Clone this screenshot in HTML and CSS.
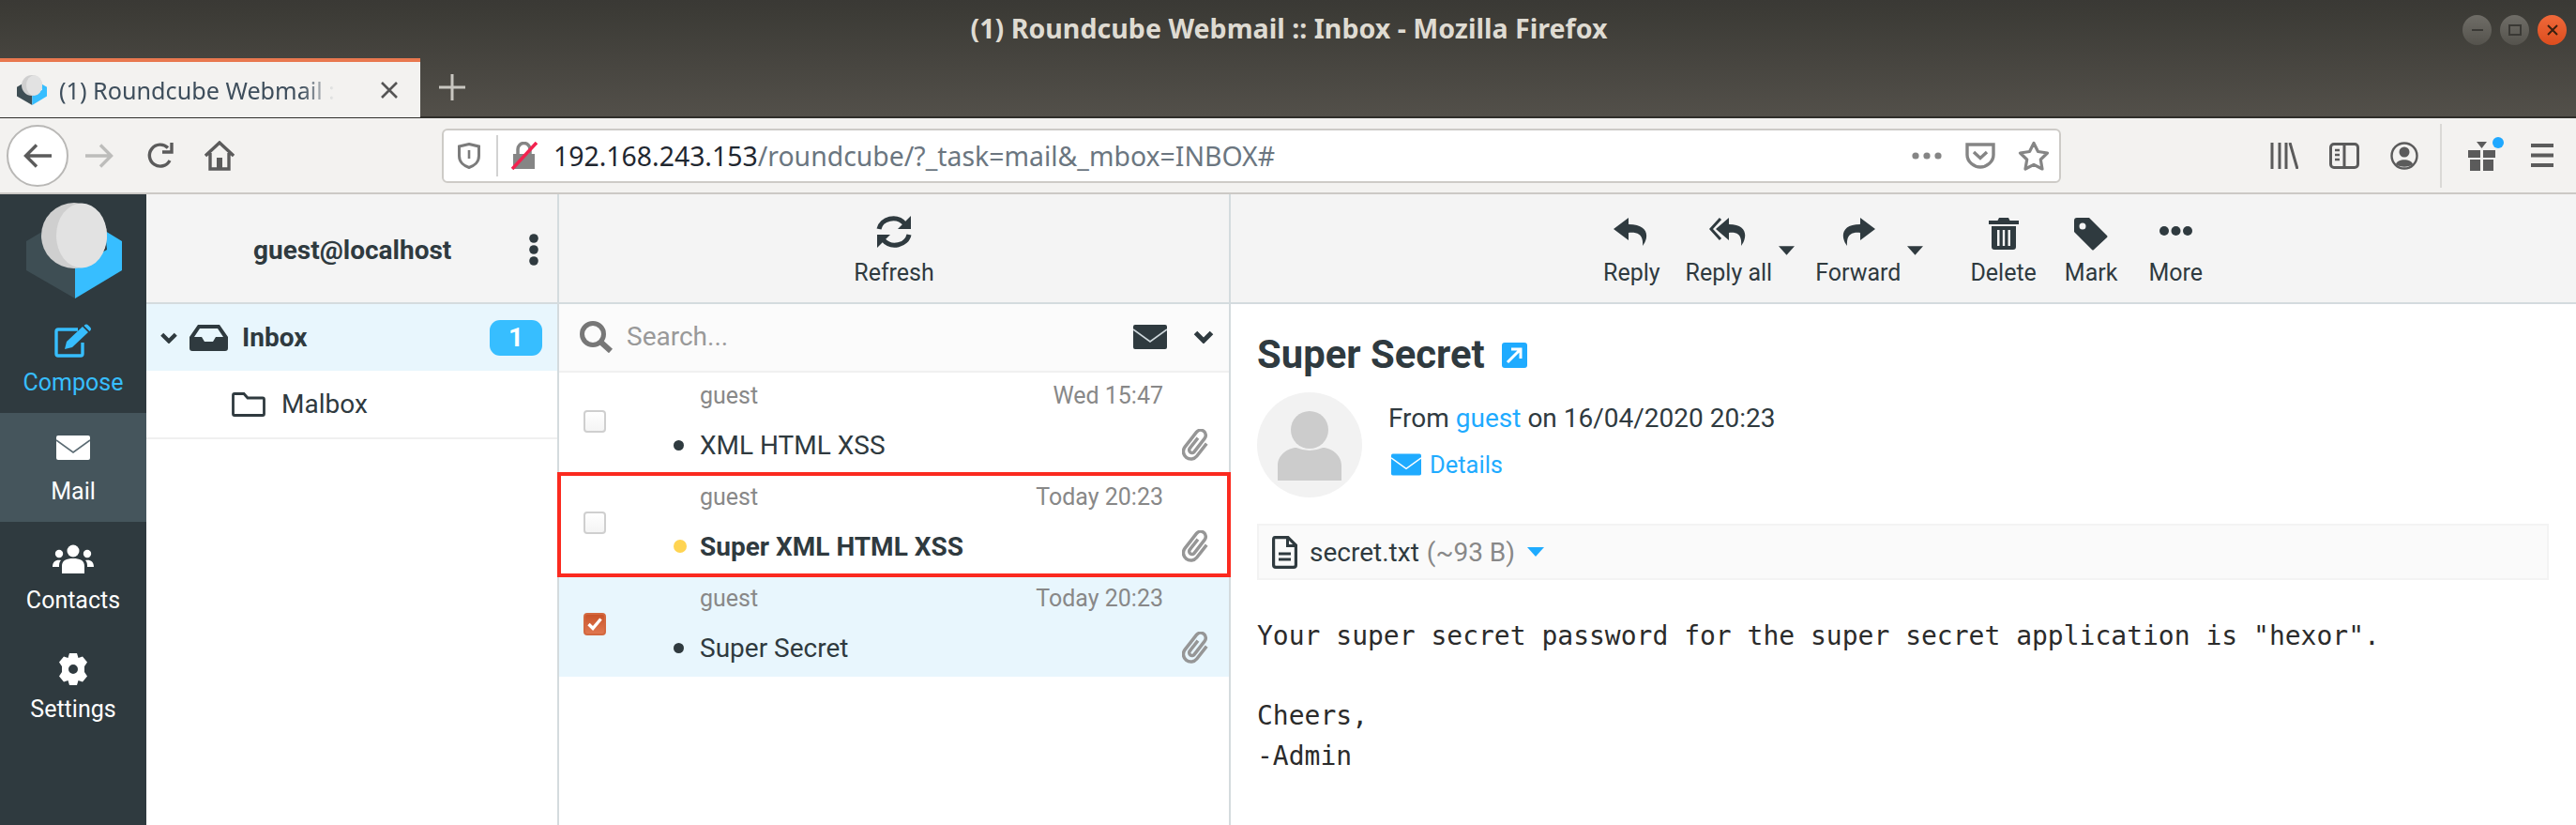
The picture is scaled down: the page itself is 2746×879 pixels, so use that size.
FILE: index.html
```html
<!DOCTYPE html>
<html lang="en">
<head>
    <meta charset="UTF-8">
    <title>(1) Roundcube Webmail :: Inbox - Mozilla Firefox</title>
    <link rel="stylesheet" href="styles.css">
</head>
<body>
    <svg class="defs" width="0" height="0">
        <symbol id="logo" viewBox="0 0 102 102">
            <path fill="#3e4e54" d="M0 41 L20 29 L52 69 V102 L0 72Z"/>
            <path fill="#37beff" d="M84 30 L102 41 V72 L52 102 V69 L86 50Z"/>
            <circle cx="51" cy="35" r="35" fill="#cfcfcf"/>
            <ellipse cx="59" cy="35" rx="27" ry="34.5" fill="#e2e2e2"/>
        </symbol>
        <symbol id="envelope" viewBox="0 0 36 26">
            <path fill="currentColor" d="M2 0H34Q36 0 36 2V24Q36 26 34 26H2Q0 26 0 24V2Q0 0 2 0Z"/>
            <path fill="none" stroke="var(--flap)" stroke-width="1.6" d="M0 5 L18 18 L36 5"/>
        </symbol>
        <symbol id="chevron" viewBox="0 0 22 14">
            <path fill="none" stroke="currentColor" stroke-width="5" d="M2.5 2.5 L11 11 L19.5 2.5"/>
        </symbol>
        <symbol id="clip" viewBox="0 0 30 34">
            <path fill="none" stroke="#969696" stroke-width="3.500" transform="rotate(38 15 17)" d="M12 10V24a3 3 0 0 0 6 0V6a5.500 5.500 0 0 0 -11 0V26a8 8 0 0 0 16 0V9"/>
        </symbol>
        <symbol id="caret" viewBox="0 0 18 10">
            <path fill="currentColor" d="M0 0H18L9 10Z"/>
        </symbol>
    </svg>

    <header class="chrome">
        <div class="titlebar">
            <span class="window-title">(1) Roundcube Webmail :: Inbox - Mozilla Firefox</span>
            <div class="window-buttons">
                <span class="wbtn"><svg width="14" height="14" viewBox="0 0 14 14"><path stroke="#3a3935" stroke-width="2" d="M1 7H13"/></svg></span>
                <span class="wbtn"><svg width="14" height="14" viewBox="0 0 14 14"><rect x="1" y="2" width="12" height="10" fill="none" stroke="#3a3935" stroke-width="2"/></svg></span>
                <span class="wbtn wbtn-close"><svg width="14" height="14" viewBox="0 0 14 14"><path stroke="#3a2010" stroke-width="2" d="M2 2L12 12M12 2L2 12"/></svg></span>
            </div>
        </div>
        <div class="tabbar">
            <div class="tab">
                <svg class="favicon" width="32" height="32"><use href="#logo"/></svg>
                <span class="tab-label">(1) Roundcube Webmail :</span>
                <svg class="tab-close" width="20" height="20" viewBox="0 0 20 20"><path stroke="#555" stroke-width="2.6" d="M2 2L18 18M18 2L2 18"/></svg>
            </div>
            <svg class="new-tab" width="28" height="28" viewBox="0 0 28 28"><path stroke="#c9c7c1" stroke-width="3" d="M14 0V28M0 14H28"/></svg>
        </div>
    </header>

    <nav class="navbar">
        <span class="back-btn">
            <svg width="32" height="28" viewBox="0 0 32 28"><path fill="none" stroke="#5b5b5b" stroke-width="3.4" d="M31 14H4M15 2.5L3.5 14L15 25.5"/></svg>
        </span>
        <svg class="nav-forward" width="32" height="28" viewBox="0 0 32 28"><path fill="none" stroke="#bdbdbb" stroke-width="3.4" d="M1 14H28M17 2.5L28.500 14L17 25.500"/></svg>
        <svg class="nav-reload" width="30" height="30" viewBox="0 0 30 30"><path fill="none" stroke="#5b5b5b" stroke-width="3.4" d="M25 20A11.500 11.500 0 1 1 23 6.500"/><path fill="none" stroke="#5b5b5b" stroke-width="3.4" d="M27 1V11H17"/></svg>
        <svg class="nav-home" width="32" height="32" viewBox="0 0 32 32"><path fill="none" stroke="#5b5b5b" stroke-width="3.4" d="M1 16L16 2L31 16M6 13V30H26V13"/><rect x="13" y="18" width="6" height="12" fill="#5b5b5b"/></svg>

        <div class="urlbar">
            <svg width="24" height="28" viewBox="0 0 24 28"><path fill="none" stroke="#7b7b7b" stroke-width="3" d="M12 1.500L22.500 4V14C22.500 21 17 25 12 26.500C7 25 1.500 21 1.500 14V4Z"/><path stroke="#7b7b7b" stroke-width="2.600" d="M12 8V17"/></svg>
            <span class="url-sep"></span>
            <svg class="url-lock" width="28" height="30" viewBox="0 0 28 30"><path fill="#858585" d="M2 13H25V29H2Z"/><path fill="none" stroke="#858585" stroke-width="3.500" d="M7 13V8A6.500 6.500 0 0 1 20 8V13"/><path stroke="#f3224f" stroke-width="3.600" d="M1 29L27 1"/></svg>
            <span class="url-text"><span class="url-host">192.168.243.153</span>/roundcube/?_task=mail&amp;_mbox=INBOX#</span>
            <svg class="url-dots" width="32" height="8" viewBox="0 0 32 8"><circle cx="4" cy="4" r="3.600" fill="#858585"/><circle cx="16" cy="4" r="3.600" fill="#858585"/><circle cx="28" cy="4" r="3.600" fill="#858585"/></svg>
            <svg class="url-pocket" width="32" height="28" viewBox="0 0 32 28"><path fill="none" stroke="#858585" stroke-width="3.400" d="M2 2H30V13C30 21 22 26 16 26C10 26 2 21 2 13Z"/><path fill="none" stroke="#858585" stroke-width="3.400" d="M9 10L16 16.500L23 10"/></svg>
            <svg class="url-star" width="34" height="32" viewBox="0 0 34 32"><path fill="none" stroke="#858585" stroke-width="3.200" stroke-linejoin="round" d="M17 2.500L21.500 11.500L31.500 13L24.300 20L26 30L17 25.300L8 30L9.700 20L2.500 13L12.500 11.500Z"/></svg>
        </div>

        <svg class="nav-library" width="30" height="28" viewBox="0 0 30 28"><path fill="none" stroke="#5b5b5b" stroke-width="3" d="M2 0V28M10 0V28M17 0V28M21 0L29 28"/></svg>
        <svg class="nav-sidebar" width="32" height="28" viewBox="0 0 32 28"><rect x="1.500" y="1.500" width="29" height="25" rx="3.500" fill="none" stroke="#5b5b5b" stroke-width="3"/><path stroke="#5b5b5b" stroke-width="3" d="M16 1V27"/><path stroke="#5b5b5b" stroke-width="2.400" d="M6 8H11M6 13H11M6 18H11"/></svg>
        <svg class="nav-account" width="30" height="30" viewBox="0 0 30 30"><circle cx="15" cy="15" r="13.500" fill="none" stroke="#5b5b5b" stroke-width="2.400"/><circle cx="15" cy="11" r="5.500" fill="#5b5b5b"/><path fill="#5b5b5b" d="M6 24C7 17.500 23 17.500 24 24C20 27.500 10 27.500 6 24Z"/></svg>
        <span class="nav-sep"></span>
        <span class="nav-gift">
            <svg width="30" height="32" viewBox="0 0 30 32"><path fill="#5b5b5b" d="M0 10H13V18H0ZM16 10H29V18H16ZM2 20H13V32H2ZM16 20H27V32H16Z"/><path fill="#5b5b5b" d="M9 1H20L14.500 8Z"/></svg>
            <span class="gift-dot"></span>
        </span>
        <svg class="nav-menu" width="24" height="25" viewBox="0 0 24 25"><path stroke="#5b5b5b" stroke-width="4" d="M0 2H24M0 12.500H24M0 23H24"/></svg>
    </nav>

    <main class="app">
        <aside class="taskmenu">
            <svg class="logo" width="102" height="102"><use href="#logo"/></svg>
            <a class="task task-compose">
                <svg width="40" height="36" viewBox="0 0 40 36"><path fill="none" stroke="#37beff" stroke-width="3.400" d="M25 6H4Q2 6 2 8V32Q2 34 4 34H28Q30 34 30 32V20"/><path fill="#37beff" d="M11 27L13 19L30 3L36 9L19 25ZM32 1.500Q34 -.500 36 1.500L38 3.500Q40 5.500 38 7.500L37.500 8L31.500 2Z"/></svg>
                <span>Compose</span>
            </a>
            <a class="task task-active">
                <svg class="mail-icon" width="36" height="26"><use href="#envelope"/></svg>
                <span>Mail</span>
            </a>
            <a class="task">
                <svg width="44" height="32" viewBox="0 0 44 32"><circle cx="22" cy="7" r="6.500" fill="#fff"/><circle cx="7" cy="10" r="4.200" fill="#fff"/><circle cx="37" cy="10" r="4.200" fill="#fff"/><path fill="#fff" d="M10 31V23C10 17 15 15 22 15C29 15 34 17 34 23V31ZM0 24C0 18 4 16 9 17C7 19 7 21 7 24ZM44 24C44 18 40 16 35 17C37 19 37 21 37 24Z"/></svg>
                <span>Contacts</span>
            </a>
            <a class="task">
                <svg width="34" height="34" viewBox="0 0 34 34"><path fill="#fff" fill-rule="evenodd" d="M13 0H21L22.500 5L27 3.500L32 9.500L29 14V20L32 24.500L27 30.500L22.500 29L21 34H13L11.500 29L7 30.500L2 24.500L5 20V14L2 9.500L7 3.500L11.500 5ZM17 12A5 5 0 1 0 17 22A5 5 0 1 0 17 12Z"/></svg>
                <span>Settings</span>
            </a>
        </aside>

        <section class="folders">
            <div class="pane-header folders-header">
                <span class="account-name">guest@localhost</span>
                <svg class="account-menu" width="10" height="34" viewBox="0 0 10 34"><circle cx="5" cy="5" r="4.800" fill="#2f3a3f"/><circle cx="5" cy="17" r="4.800" fill="#2f3a3f"/><circle cx="5" cy="29" r="4.800" fill="#2f3a3f"/></svg>
            </div>
            <div class="folder folder-selected">
                <svg class="folder-toggle" width="20" height="12"><use href="#chevron"/></svg>
                <svg class="folder-inbox" width="41" height="28" viewBox="0 0 41 28"><path fill="#2f3a3f" fill-rule="evenodd" d="M9 0H32L41 13V25Q41 28 38 28H3Q0 28 0 25V13ZM11 4L5 13H13L16 18H25L28 13H36L30 4Z"/></svg>
                <span class="folder-name">Inbox</span>
                <span class="badge">1</span>
            </div>
            <div class="folder folder-sub">
                <svg width="36" height="26" viewBox="0 0 36 26"><path fill="none" stroke="#2f3a3f" stroke-width="2.800" d="M1.500 3Q1.500 1.500 3 1.500H13L17 6H33Q34.500 6 34.500 7.500V23Q34.500 24.500 33 24.500H3Q1.500 24.500 1.500 23Z"/></svg>
                <span>Malbox</span>
            </div>
        </section>

        <section class="messages">
            <div class="pane-header messages-header">
                <a class="tool tool-refresh">
                    <svg width="38" height="36" viewBox="0 0 38 36"><path fill="none" stroke="#2f3a3f" stroke-width="5" d="M3 15C5 4 22 -1 31 10"/><path fill="#2f3a3f" d="M37 1V15H23Z"/><path fill="none" stroke="#2f3a3f" stroke-width="5" d="M35 21C33 32 16 37 7 26"/><path fill="#2f3a3f" d="M1 35V21H15Z"/></svg>
                    <span>Refresh</span>
                </a>
            </div>
            <div class="searchbar">
                <svg class="search-icon" width="36" height="34" viewBox="0 0 36 34"><circle cx="15" cy="14" r="11.500" fill="none" stroke="#777" stroke-width="5"/><path stroke="#777" stroke-width="6" d="M23 22L34 32"/></svg>
                <span class="search-text">Search...</span>
                <svg class="search-mail" width="36" height="26" style="--flap:#cfd8dc"><use href="#envelope"/></svg>
                <svg class="search-more" width="22" height="14"><use href="#chevron"/></svg>
            </div>
            <div class="msg">
                <span class="msg-check"></span>
                <span class="msg-dot"></span>
                <div class="msg-meta"><span>guest</span><span>Wed 15:47</span></div>
                <span class="msg-subject">XML HTML XSS</span>
                <svg class="msg-clip" width="30" height="34"><use href="#clip"/></svg>
            </div>
            <div class="msg msg-marked">
                <span class="msg-check"></span>
                <span class="msg-dot msg-dot-unread"></span>
                <div class="msg-meta"><span>guest</span><span>Today 20:23</span></div>
                <span class="msg-subject msg-subject-unread">Super XML HTML XSS</span>
                <svg class="msg-clip" width="30" height="34"><use href="#clip"/></svg>
            </div>
            <div class="msg msg-selected">
                <span class="msg-check msg-check-on">
                    <svg width="16" height="14" viewBox="0 0 16 14"><path fill="none" stroke="#fff" stroke-width="3.400" d="M1.500 7L6 11.500L14.500 1.500"/></svg>
                </span>
                <span class="msg-dot"></span>
                <div class="msg-meta"><span>guest</span><span>Today 20:23</span></div>
                <span class="msg-subject">Super Secret</span>
                <svg class="msg-clip" width="30" height="34"><use href="#clip"/></svg>
            </div>
        </section>

        <section class="content">
            <div class="pane-header content-header">
                <a class="tool tool-reply">
                    <svg width="40" height="30" viewBox="0 0 40 30"><path fill="#2f3a3f" d="M17 0L1 12L17 24V16C28 15 33 19 32 30C39 21 39 7 17 7Z"/></svg>
                    <span>Reply</span>
                </a>
                <a class="tool tool-replyall">
                    <svg width="41" height="30" viewBox="0 0 41 30"><path fill="#2f3a3f" d="M21 0L7 12L21 24V16C31 15 35 19 34 30C41 21 41 7 21 7Z"/><path fill="none" stroke="#2f3a3f" stroke-width="3" d="M12 1L2 12L12 23"/></svg>
                    <span>Reply all</span>
                </a>
                <svg class="tool-caret" width="17" height="10"><use href="#caret"/></svg>
                <a class="tool tool-forward">
                    <svg width="38" height="30" viewBox="0 0 38 30"><path fill="#2f3a3f" d="M21 0L37 12L21 24V16C11 15 6 19 7 30C0 21 0 7 21 7Z"/></svg>
                    <span>Forward</span>
                </a>
                <svg class="tool-caret" width="17" height="10"><use href="#caret"/></svg>
                <a class="tool tool-delete">
                    <svg width="32" height="34" viewBox="0 0 32 34"><path fill="#2f3a3f" fill-rule="evenodd" d="M11 0H21L22.500 3H32V7H0V3H9.500ZM3 9H29V31Q29 34 26 34H6Q3 34 3 31ZM9 13V30H11.500V13ZM14.800 13V30H17.200V13ZM20.500 13V30H23V13Z"/></svg>
                    <span>Delete</span>
                </a>
                <a class="tool tool-mark">
                    <svg width="36" height="35" viewBox="0 0 36 35"><path fill="#2f3a3f" fill-rule="evenodd" d="M3 0H16L35 19Q36 20 35 21L21 34Q20 35 19 34L0 15V3Q0 0 3 0ZM9 5.500A3.500 3.500 0 1 0 9 12.500A3.500 3.500 0 1 0 9 5.500Z"/></svg>
                    <span>Mark</span>
                </a>
                <a class="tool tool-more">
                    <svg class="more-icon" width="35" height="12" viewBox="0 0 35 12"><circle cx="5" cy="6" r="5" fill="#2f3a3f"/><circle cx="17.500" cy="6" r="5" fill="#2f3a3f"/><circle cx="30" cy="6" r="5" fill="#2f3a3f"/></svg>
                    <span>More</span>
                </a>
            </div>
            <div class="message">
                <h2 class="subject">Super Secret
                    <svg class="open-icon" width="27" height="27" viewBox="0 0 27 27"><rect width="27" height="27" rx="3" fill="#1fabff"/><path fill="none" stroke="#fff" stroke-width="3" d="M6 21L19 8M10 7H20V17"/></svg>
                </h2>
                <div class="sender">
                    <svg class="avatar" width="112" height="112" viewBox="0 0 112 112"><circle cx="56" cy="56" r="56" fill="#f2f2f2"/><ellipse cx="56" cy="40" rx="20" ry="20" fill="#ccc"/><path fill="#ccc" d="M22 94V78C22 66 34 59 42 59Q56 65 70 59C78 59 90 66 90 78V94Z"/></svg>
                    <div class="sender-info">
                        <div class="sender-line">From <a class="link">guest</a> on 16/04/2020 20:23</div>
                        <a class="details"><svg width="32" height="24" style="--flap:#fff"><use href="#envelope"/></svg>Details</a>
                    </div>
                </div>
                <div class="attachments">
                    <svg width="27" height="35" viewBox="0 0 27 35"><path fill="none" stroke="#2f3a3f" stroke-width="3.200" d="M3 1.600H17L25.400 10V31Q25.400 33.400 23 33.400H4Q1.600 33.400 1.600 31V4Q1.600 1.600 3 1.600Z"/><path fill="#2f3a3f" d="M15 2H18V9H25V12H15Z"/><path stroke="#2f3a3f" stroke-width="3" d="M7 19H20M7 25H20"/></svg>
                    <span class="file-name">secret.txt</span>
                    <span class="file-size">(~93 B)</span>
                    <svg class="file-caret" width="18" height="10"><use href="#caret"/></svg>
                </div>
                <pre class="body-text">Your super secret password for the super secret application is "hexor".

Cheers,
-Admin</pre>
            </div>
        </section>
    </main>
</body>
</html>
```

FILE: styles.css
```css
* {
    box-sizing: border-box;
}

html, body {
    margin: 0;
    height: 879px;
    overflow: hidden;
}

body {
    font-family: Roboto, "Liberation Sans", sans-serif;
    font-size: 25px;
    color: #2f3a3f;
    background-color: #fff;
    display: flex;
    flex-direction: column;
}

.defs {
    position: absolute;
}

svg {
    display: block;
    flex: none;
    --flap: #5b6b73;
    color: inherit;
}

a {
    color: inherit;
    text-decoration: none;
}

/* window frame */
.chrome {
    height: 126px;
    flex: none;
    background: linear-gradient(#3a3935 0, #3c3b36 12px, #53504a 125px);
    border-bottom: 2px solid #2f2e2a;
}

.titlebar {
    height: 61px;
    display: flex;
    align-items: center;
    justify-content: center;
    padding: 0 0 3px 2px;
    position: relative;
}

.window-title {
    font-family: "Noto Sans", sans-serif;
    font-weight: 700;
    font-size: 28.6px;
    color: #dfdbd2;
}

.window-buttons {
    position: absolute;
    top: 16px;
    right: 10px;
    display: flex;
    gap: 9px;
}

.wbtn {
    width: 31px;
    height: 32px;
    border-radius: 50%;
    background: linear-gradient(#6f6d67, #55534d);
    display: flex;
    align-items: center;
    justify-content: center;
}

.wbtn-close {
    background: linear-gradient(#f0693a, #dc4d1e);
}

.tabbar {
    height: 63px;
    display: flex;
    align-items: flex-start;
    margin-top: 1px;
}

.tab {
    width: 448px;
    height: 63px;
    border-top: 4px solid #e9784f;
    background-color: #f3f2f0;
    display: flex;
    align-items: center;
    padding: 0 23px 0 18px;
    margin-bottom: 1px;
}

.tab-label {
    font-family: "Noto Sans", sans-serif;
    font-size: 25.2px;
    color: #3e4e5c;
    margin-left: 13px;
    white-space: nowrap;
    -webkit-mask-image: linear-gradient(to right, #000 88%, transparent 100%);
    mask-image: linear-gradient(to right, #000 88%, transparent 100%);
}

.tab-close {
    margin-left: auto;
}

.new-tab {
    margin: 17px 0 0 20px;
}

/* navigation toolbar */
.navbar {
    height: 81px;
    flex: none;
    display: flex;
    align-items: center;
    padding-left: 7px;
    background-color: #f3f2f0;
    border-bottom: 2px solid #ccc9c5;
}

.back-btn {
    width: 66px;
    height: 66px;
    border-radius: 50%;
    border: 2px solid #b9b8b6;
    background-color: #fff;
    display: flex;
    align-items: center;
    justify-content: center;
}

.nav-forward { margin-left: 17px; }
.nav-reload { margin-left: 34px; }
.nav-home { margin-left: 32px; }
.nav-library { margin-left: 223px; }
.nav-sidebar { margin-left: 33px; }
.nav-account { margin-left: 33px; }

.urlbar {
    margin-left: 221px;
    width: 1726px;
    height: 58px;
    background-color: #fff;
    border: 2px solid #cdcbc7;
    border-radius: 6px;
    display: flex;
    align-items: center;
    padding-left: 15px;
}

.url-sep {
    width: 2px;
    height: 44px;
    margin-left: 17px;
    background-color: #d2d2d2;
}

.url-lock { margin-left: 14px; }

.url-text {
    font-family: "Noto Sans", sans-serif;
    font-size: 28.4px;
    color: #6b7680;
    margin-left: 17px;
    white-space: nowrap;
}

.url-host {
    color: #1f2730;
}

.url-dots { margin-left: auto; }
.url-pocket { margin-left: 25px; }
.url-star { margin: 0 10px 0 24px; }

.nav-sep {
    width: 2px;
    height: 68px;
    margin-left: 23px;
    background-color: #dad9d6;
}

.nav-gift {
    margin-left: 28px;
    position: relative;
}

.gift-dot {
    position: absolute;
    top: -4px;
    right: -8px;
    width: 12px;
    height: 12px;
    border-radius: 50%;
    background-color: #1fa8ff;
}

.nav-menu { margin-left: 37px; }

/* app panes */
.app {
    flex: 1;
    display: flex;
    min-height: 0;
}

.taskmenu {
    width: 156px;
    flex: none;
    background-color: #2f3a3f;
    color: #fff;
    display: flex;
    flex-direction: column;
    align-items: center;
    padding-top: 9px;
}

.logo {
    margin: 0 0 6px 2px;
}

.task {
    width: 100%;
    height: 116px;
    display: flex;
    flex-direction: column;
    align-items: center;
    justify-content: flex-end;
    padding-bottom: 18px;
}

.task svg {
    margin-bottom: auto;
    margin-top: 24px;
}

.task-compose svg {
    margin-top: 21px;
}

.task-compose {
    color: #37beff;
}

.task-active {
    background-color: #45555c;
}

.mail-icon {
    color: #fff;
}

.folders {
    width: 440px;
    flex: none;
    border-right: 2px solid #d4dbde;
    font-size: 28px;
}

.pane-header {
    height: 117px;
    background-color: #f4f4f4;
    border-bottom: 2px solid #d4dbde;
    display: flex;
}

.folders-header {
    align-items: center;
    padding: 3px 0 0 114px;
}

.account-name {
    font-weight: 700;
    font-size: 28px;
}

.account-menu {
    margin-left: 83px;
}

.folder {
    height: 71px;
    display: flex;
    align-items: center;
}

.folder-selected {
    background-color: #e8f6fd;
    padding-left: 14px;
}

.folder-toggle {
    margin: 0 12px 0 0;
}

.folder-name {
    font-weight: 700;
    margin-left: 15px;
}

.badge {
    margin-left: auto;
    margin-right: 16px;
    width: 56px;
    height: 38px;
    border-radius: 11px;
    background-color: #37beff;
    color: #fff;
    font-weight: 700;
    text-align: center;
    line-height: 38px;
}

.folder-sub {
    padding-left: 91px;
    gap: 17px;
    height: 73px;
    border-bottom: 2px solid #f0f0f0;
}

.messages {
    width: 716px;
    flex: none;
    border-right: 2px solid #d4dbde;
}

.messages-header {
    justify-content: center;
}

.tool {
    display: flex;
    flex-direction: column;
    align-items: center;
    justify-content: flex-end;
    padding-bottom: 17px;
}

.tool svg {
    margin-bottom: auto;
    margin-top: 25px;
}

.tool-refresh svg {
    margin-top: 22px;
}

.searchbar {
    height: 73px;
    background-color: #fbfbfb;
    border-bottom: 2px solid #f0f0f0;
    display: flex;
    align-items: center;
    padding: 0 0 2px 21px;
}

.search-text {
    margin-left: 15px;
    color: #999;
    font-size: 28px;
}

.search-mail {
    margin-left: auto;
}

.search-more {
    margin: 0 16px 0 28px;
}

.msg {
    height: 108px;
    display: grid;
    grid-template-columns: 122px 28px 1fr 50px;
    grid-template-rows: 50px 54px;
    padding-right: 20px;
}

.msg-selected {
    background-color: #e8f6fd;
}

.msg-marked {
    outline: 4px solid #fb2a1f;
    outline-offset: -2px;
}

.msg-check {
    grid-row: 1 / 3;
    grid-column: 1;
    align-self: center;
    margin-left: 26px;
    width: 24px;
    height: 24px;
    border: 2px solid #cfcfcf;
    border-radius: 4px;
    background: linear-gradient(#fff, #f4f4f4);
    display: flex;
    align-items: center;
    justify-content: center;
}

.msg-check-on {
    background: linear-gradient(#c9542a, #e0774f);
    border-color: #d3683f;
}

.msg-dot {
    grid-row: 2;
    grid-column: 2;
    align-self: center;
    width: 11px;
    height: 11px;
    border-radius: 50%;
    background-color: #2f3a3f;
}

.msg-dot-unread {
    width: 14px;
    height: 14px;
    background-color: #ffd452;
}

.msg-meta {
    grid-row: 1;
    grid-column: 3;
    align-self: end;
    display: flex;
    justify-content: space-between;
    color: #888;
    font-size: 25px;
    line-height: 28px;
    margin-bottom: 11px;
}

.msg-subject {
    grid-row: 2;
    grid-column: 3;
    align-self: center;
    font-size: 28px;
}

.msg-subject-unread {
    font-weight: 700;
}

.msg-clip {
    grid-row: 2;
    grid-column: 4;
    align-self: center;
    justify-self: end;
}

.content {
    flex: 1;
    min-width: 0;
}

.content-header {
    padding-left: 397px;
}

.tool-caret {
    margin: 55px 0 0 7px;
}

.tool-replyall { margin-left: 27px; }
.tool-forward { margin-left: 22px; }
.tool-delete { margin-left: 50px; }
.tool-mark { margin-left: 30px; }
.tool-more { margin-left: 33px; }

.more-icon {
    margin-top: 33px !important;
}

.message {
    padding: 0 29px 0 28px;
}

.subject {
    margin: 33px 0 0;
    font-size: 41.8px;
    font-weight: 700;
    line-height: 42px;
    display: flex;
    align-items: center;
    gap: 18px;
}

.sender {
    margin-top: 19px;
    display: flex;
}

.sender-info {
    margin-left: 28px;
    font-size: 28px;
}

.sender-line {
    line-height: 32px;
    margin-top: 12px;
}

.link {
    color: #1fabff;
}

.details {
    display: flex;
    align-items: center;
    gap: 9px;
    margin: 19px 0 0 3px;
    color: #1fabff;
    font-size: 25.5px;
    line-height: 28px;
}

.attachments {
    margin-top: 28px;
    height: 60px;
    background-color: #fafafa;
    border: 2px solid #f3f3f3;
    display: flex;
    align-items: center;
    padding-left: 14px;
    font-size: 28px;
}

.file-name {
    margin-left: 13px;
}

.file-size {
    margin-left: 8px;
    color: #888;
}

.file-caret {
    margin-left: 13px;
    color: #1fabff;
}

.body-text {
    margin: 39px 0 0;
    font-family: "DejaVu Sans Mono", monospace;
    font-size: 28px;
    line-height: 42.5px;
    color: #2b2b2b;
}
```
